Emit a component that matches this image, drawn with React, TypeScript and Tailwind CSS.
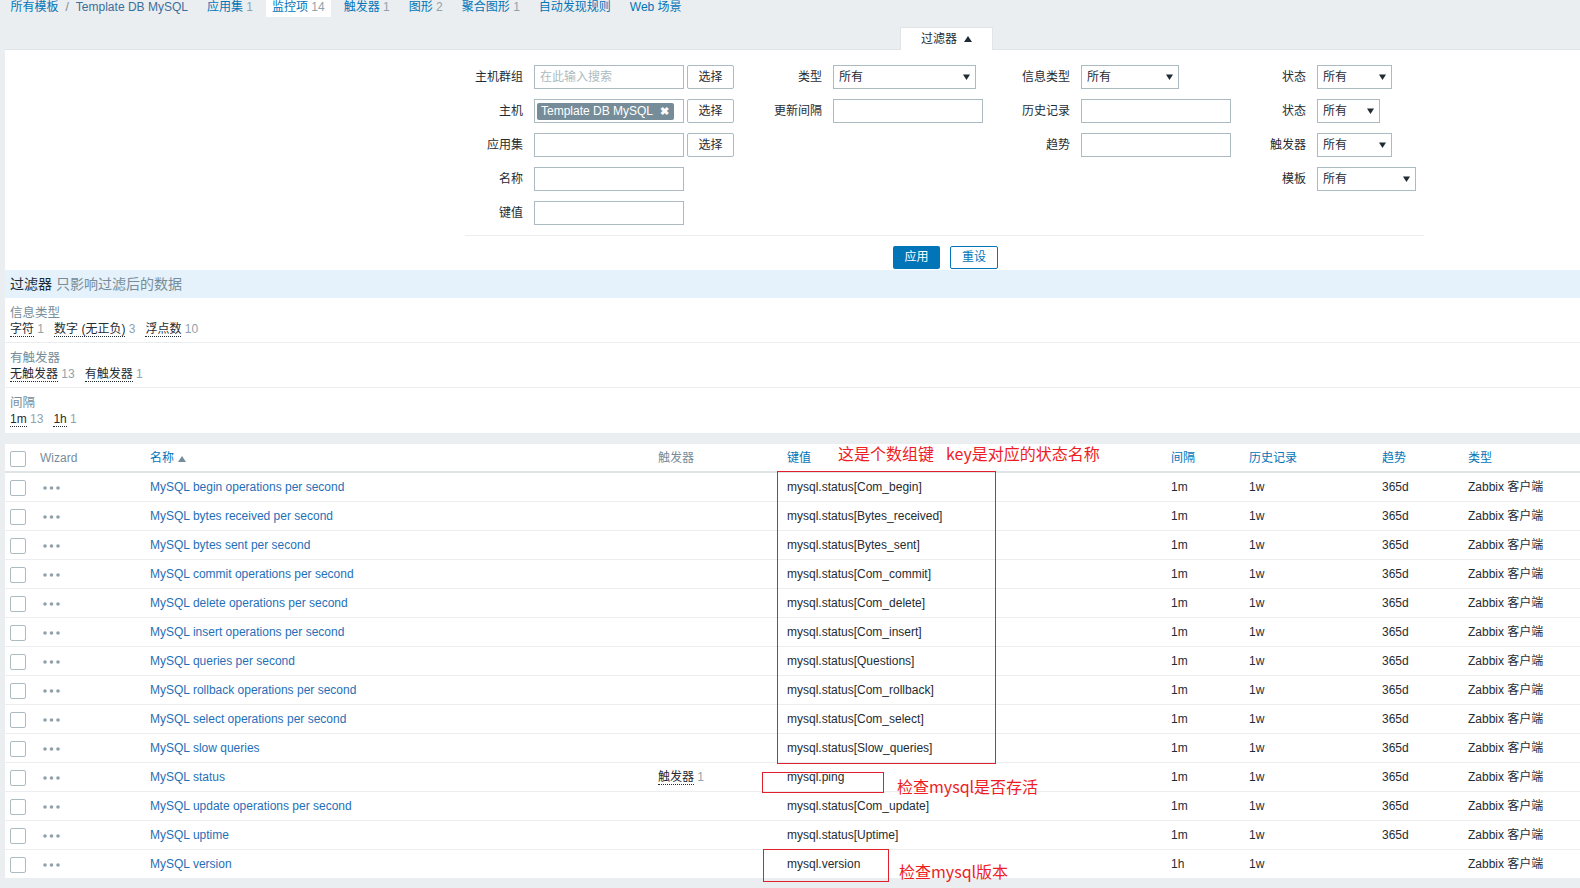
import React from 'react';

const DownArrow = () => (
  <svg width="7" height="6" viewBox="0 0 7 6" className="shrink-0">
    <path d="M0 0.5h7L3.5 6z" fill="#1f2c33" />
  </svg>
);

const UpArrow = ({ color = '#1f2c33' }: { color?: string }) => (
  <svg width="8" height="6" viewBox="0 0 8 6" className="shrink-0">
    <path d="M4 0L8 6H0z" fill={color} />
  </svg>
);

const Dots = () => (
  <svg width="17" height="4" viewBox="0 0 17 4">
    <circle cx="2" cy="2" r="1.8" fill="#8fa0aa" />
    <circle cx="8.5" cy="2" r="1.8" fill="#8fa0aa" />
    <circle cx="15" cy="2" r="1.8" fill="#8fa0aa" />
  </svg>
);

const Checkbox = () => (
  <div className="w-[16px] h-[16px] border border-[#acbbc2] rounded-[2px] bg-white" />
);

const Label = ({ children }: { children?: React.ReactNode }) => (
  <div className="text-right pr-[11px] leading-[24px] whitespace-nowrap">{children}</div>
);

const Input = ({ children }: { children?: React.ReactNode }) => (
  <div className="w-[150px] h-[24px] border border-[#acbbc2] bg-white flex items-center pl-[5px] overflow-hidden">
    {children}
  </div>
);

const SelBtn = () => (
  <div className="w-[47px] h-[24px] border border-[#acbbc2] rounded-[2px] bg-white flex items-center justify-center">
    选择
  </div>
);

const Select = ({ w }: { w: string }) => (
  <div className={`${w} h-[24px] border border-[#acbbc2] bg-white flex items-center justify-between pl-[5px] pr-[5px]`}>
    <span>所有</span>
    <DownArrow />
  </div>
);

const Empty = () => <div />;

const rows: { name: string; key: string; trig?: boolean; interval: string; trends: string }[] = [
  { name: 'MySQL begin operations per second', key: 'mysql.status[Com_begin]', interval: '1m', trends: '365d' },
  { name: 'MySQL bytes received per second', key: 'mysql.status[Bytes_received]', interval: '1m', trends: '365d' },
  { name: 'MySQL bytes sent per second', key: 'mysql.status[Bytes_sent]', interval: '1m', trends: '365d' },
  { name: 'MySQL commit operations per second', key: 'mysql.status[Com_commit]', interval: '1m', trends: '365d' },
  { name: 'MySQL delete operations per second', key: 'mysql.status[Com_delete]', interval: '1m', trends: '365d' },
  { name: 'MySQL insert operations per second', key: 'mysql.status[Com_insert]', interval: '1m', trends: '365d' },
  { name: 'MySQL queries per second', key: 'mysql.status[Questions]', interval: '1m', trends: '365d' },
  { name: 'MySQL rollback operations per second', key: 'mysql.status[Com_rollback]', interval: '1m', trends: '365d' },
  { name: 'MySQL select operations per second', key: 'mysql.status[Com_select]', interval: '1m', trends: '365d' },
  { name: 'MySQL slow queries', key: 'mysql.status[Slow_queries]', interval: '1m', trends: '365d' },
  { name: 'MySQL status', key: 'mysql.ping', trig: true, interval: '1m', trends: '365d' },
  { name: 'MySQL update operations per second', key: 'mysql.status[Com_update]', interval: '1m', trends: '365d' },
  { name: 'MySQL uptime', key: 'mysql.status[Uptime]', interval: '1m', trends: '365d' },
  { name: 'MySQL version', key: 'mysql.version', interval: '1h', trends: '' },
];

const NavItem = ({ label, count, active }: { label: string; count?: string; active?: boolean }) => (
  <div className={`mx-[3.5px] px-[6px] h-[17px] leading-[15px] whitespace-nowrap ${active ? 'bg-white' : ''}`}>
    <span className="text-[#0275b8]">{label}</span>
    {count && <span className="text-[#8fa3ad]"> {count}</span>}
  </div>
);

const Stat = ({ label, count }: { label: string; count: string }) => (
  <span className="mr-[10px] whitespace-nowrap">
    <span className="border-b border-dotted border-[#1f2c33]">{label}</span>
    <span className="text-[#8fa3ad]"> {count}</span>
  </span>
);

export default function App() {
  return (
    <div className="relative w-[1580px] h-[888px] overflow-hidden bg-[#ebeef0] font-['Liberation_Sans','Noto_Sans_CJK_SC',sans-serif] text-[12px] text-[#1f2c33] leading-[15px]">
      {/* top nav */}
      <div className="flex h-[17px] pl-[1px]">
        <div className="mx-[3.5px] px-[6px] h-[17px] leading-[15px] whitespace-nowrap">
          <span className="text-[#0275b8]">所有模板</span>
          <span className="text-[#768d99] mx-[7px]">/</span>
          <span className="text-[#3a6f9c]">Template DB MySQL</span>
        </div>
        <NavItem label="应用集" count="1" />
        <NavItem label="监控项" count="14" active />
        <NavItem label="触发器" count="1" />
        <NavItem label="图形" count="2" />
        <NavItem label="聚合图形" count="1" />
        <NavItem label="自动发现规则" />
        <NavItem label="Web 场景" />
      </div>

      <div className="pl-[5px]">
        {/* filter tab */}
        <div className="pt-[10px] pl-[895px]">
          <div className="relative z-10 -mb-px w-[93px] h-[23px] bg-white border border-b-0 border-[#dfe4e7] flex items-center justify-center gap-[7px]">
            <span>过滤器</span>
            <UpArrow />
          </div>
        </div>

        {/* filter panel */}
        <div className="bg-white border-t border-[#dfe4e7] pt-[15px] pb-px">
          <div className="ml-[460px] w-[959px]">
            <div className="grid grid-cols-[69px_210px_89px_160px_88px_160px_76px_107px] auto-rows-[24px] gap-y-[10px]">
              {/* row 1 */}
              <Label>主机群组</Label>
              <div className="flex gap-[3px]">
                <Input><span className="text-[#acbbc2]">在此输入搜索</span></Input>
                <SelBtn />
              </div>
              <Label>类型</Label>
              <Select w="w-[143px]" />
              <Label>信息类型</Label>
              <Select w="w-[98px]" />
              <Label>状态</Label>
              <Select w="w-[75px]" />
              {/* row 2 */}
              <Label>主机</Label>
              <div className="flex gap-[3px]">
                <div className="w-[150px] h-[24px] border border-[#acbbc2] bg-white flex items-center pl-[2px]">
                  <div className="h-[17px] bg-[#768d99] text-white flex items-center pl-[4px] pr-[5px] gap-[7px] rounded-[2px]">
                    <span>Template DB MySQL</span>
                    <span className="text-[11px] font-bold">✖</span>
                  </div>
                </div>
                <SelBtn />
              </div>
              <Label>更新间隔</Label>
              <Input />
              <Label>历史记录</Label>
              <Input />
              <Label>状态</Label>
              <Select w="w-[63px]" />
              {/* row 3 */}
              <Label>应用集</Label>
              <div className="flex gap-[3px]">
                <Input />
                <SelBtn />
              </div>
              <Empty />
              <Empty />
              <Label>趋势</Label>
              <Input />
              <Label>触发器</Label>
              <Select w="w-[75px]" />
              {/* row 4 */}
              <Label>名称</Label>
              <Input />
              <Empty />
              <Empty />
              <Empty />
              <Empty />
              <Label>模板</Label>
              <Select w="w-[99px]" />
              {/* row 5 */}
              <Label>键值</Label>
              <Input />
            </div>
            <div className="mt-[10px] h-px bg-[#ebeef0]" />
          </div>
          <div className="mt-[10px] pl-[888px] flex gap-[10px]">
            <div className="w-[47px] h-[23px] rounded-[2px] bg-[#0275b8] text-white flex items-center justify-center">应用</div>
            <div className="w-[48px] h-[23px] rounded-[2px] border border-[#0275b8] bg-white text-[#0275b8] flex items-center justify-center">重设</div>
          </div>
        </div>

        {/* filter summary band */}
        <div className="h-[28px] bg-[#e5f1fb] flex items-center pl-[5px] text-[14px]">
          <span>过滤器</span>
          <span className="text-[#768d99] ml-[4px]">只影响过滤后的数据</span>
        </div>

        <div className="h-[45px] bg-white border-b border-[#ebeef0] pl-[5px] pt-[8px]">
          <div className="text-[#768d99] text-[12.5px] leading-[15px]">信息类型</div>
          <div className="leading-[16px]">
            <Stat label="字符" count="1" />
            <Stat label="数字 (无正负)" count="3" />
            <Stat label="浮点数" count="10" />
          </div>
        </div>
        <div className="h-[45px] bg-white border-b border-[#ebeef0] pl-[5px] pt-[8px]">
          <div className="text-[#768d99] text-[12.5px] leading-[15px]">有触发器</div>
          <div className="leading-[16px]">
            <Stat label="无触发器" count="13" />
            <Stat label="有触发器" count="1" />
          </div>
        </div>
        <div className="h-[45px] bg-white pl-[5px] pt-[8px]">
          <div className="text-[#768d99] text-[12.5px] leading-[15px]">间隔</div>
          <div className="leading-[16px]">
            <Stat label="1m" count="13" />
            <Stat label="1h" count="1" />
          </div>
        </div>

        {/* table */}
        <div className="mt-[11px] bg-white">
          <div className="grid grid-cols-[30px_110px_508px_129px_384px_78px_133px_86px_1fr] h-[29px] border-b-2 border-[#dfe4e7] items-center pt-[2px]">
            <div className="pl-[5px]"><Checkbox /></div>
            <div className="pl-[5px] text-[#768d99]">Wizard</div>
            <div className="pl-[5px] flex items-center gap-[4px] text-[#0275b8]">
              <span>名称</span>
              <UpArrow color="#768d99" />
            </div>
            <div className="pl-[5px] text-[#768d99]">触发器</div>
            <div className="pl-[5px] text-[#0275b8]">键值</div>
            <div className="pl-[5px] text-[#0275b8]">间隔</div>
            <div className="pl-[5px] text-[#0275b8]">历史记录</div>
            <div className="pl-[5px] text-[#0275b8]">趋势</div>
            <div className="pl-[5px] text-[#0275b8]">类型</div>
          </div>
          {rows.map((r) => (
            <div
              key={r.name}
              className="grid grid-cols-[30px_110px_508px_129px_384px_78px_133px_86px_1fr] h-[29px] border-b border-[#ebeef0] items-center pt-px"
            >
              <div className="pl-[5px]"><Checkbox /></div>
              <div className="pl-[8px] flex items-center"><Dots /></div>
              <div className="pl-[5px] text-[#1f6fb8] whitespace-nowrap">{r.name}</div>
              <div className="pl-[5px] whitespace-nowrap">
                {r.trig && (
                  <>
                    <span className="border-b border-dotted border-[#1f2c33]">触发器</span>
                    <span className="text-[#8fa3ad]"> 1</span>
                  </>
                )}
              </div>
              <div className="pl-[5px] whitespace-nowrap">{r.key}</div>
              <div className="pl-[5px]">{r.interval}</div>
              <div className="pl-[5px]">1w</div>
              <div className="pl-[5px]">{r.trends}</div>
              <div className="pl-[5px] whitespace-nowrap">Zabbix 客户端</div>
            </div>
          ))}
        </div>
      </div>

      {/* red annotations */}
      <div className="absolute left-[838px] top-[445px] text-[16px] leading-[16px] text-[#ee1c25] font-['Noto_Sans_CJK_SC',sans-serif] whitespace-nowrap">
        这是个数组键<span className="ml-[12px]">key是对应的状态名称</span>
      </div>
      <div className="absolute left-[777px] top-[471px] w-[219px] h-[293px] border border-[#e0202a]" />
      <div className="absolute left-[762px] top-[772px] w-[122px] h-[21px] border border-[#e0202a]" />
      <div className="absolute left-[897px] top-[777px] text-[16px] leading-[18px] text-[#ee1c25] font-['Noto_Sans_CJK_SC',sans-serif] whitespace-nowrap">
        检查mysql是否存活
      </div>
      <div className="absolute left-[763px] top-[849px] w-[126px] h-[33px] border border-[#e0202a]" />
      <div className="absolute left-[899px] top-[862px] text-[16px] leading-[18px] text-[#ee1c25] font-['Noto_Sans_CJK_SC',sans-serif] whitespace-nowrap">
        检查mysql版本
      </div>
    </div>
  );
}
